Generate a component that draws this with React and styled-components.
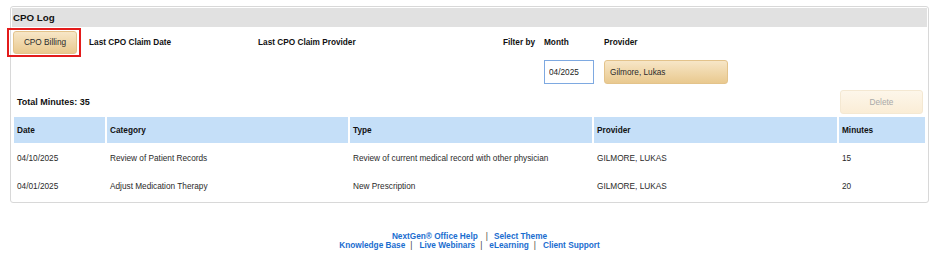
import React from "react";
import styled, { createGlobalStyle } from "styled-components";

const Global = createGlobalStyle`
  html, body { margin: 0; padding: 0; background: #fff; }
  body { font-family: "Liberation Sans", Arial, sans-serif; color: #222; }
`;

const Page = styled.div`
  padding: 6px 3px 0 10px;
`;

const Panel = styled.section`
  box-sizing: border-box;
  width: 919px;
  border: 1px solid #d8d8d8;
  border-radius: 3px;
  padding: 1px;
`;

const PanelHeader = styled.h2`
  margin: 0;
  height: 19px;
  line-height: 19px;
  padding-left: 1px;
  background: #e1e1e1;
  font-size: 9.75px;
  font-weight: bold;
  color: #111;
`;

const FilterGrid = styled.div`
  display: grid;
  grid-template-columns: 76px 169px 245px 41px 60px 1fr;
  grid-template-rows: 23px 24px;
  row-gap: 6px;
  padding: 4px 0 0 1px;
  align-items: center;
`;

const Label = styled.span`
  font-size: 8.25px;
  font-weight: bold;
  color: #111;
  grid-column: ${(p) => p.$col};
  grid-row: ${(p) => p.$row || 1};
`;

const Highlight = styled.div`
  position: relative;
  width: 64px;
  height: 23px;
  grid-column: 1;
  grid-row: 1;
  &::after {
    content: "";
    position: absolute;
    left: -6px;
    top: -3px;
    right: -4px;
    bottom: -3px;
    border: 2px solid #e31b1b;
    pointer-events: none;
  }
`;

const TanButton = styled.button`
  box-sizing: border-box;
  width: ${(p) => p.$w}px;
  height: ${(p) => p.$h}px;
  padding: ${(p) => (p.$left ? "0 0 0 5px" : "0")};
  text-align: ${(p) => (p.$left ? "left" : "center")};
  font-family: "Liberation Sans", Arial, sans-serif;
  font-size: 8.25px;
  color: ${(p) => (p.disabled ? "#a9a9a9" : "#2a2a2a")};
  border: 1px solid ${(p) => (p.disabled ? "#f4e8d2" : "#e3c38b")};
  border-radius: 3px;
  background: ${(p) =>
    p.disabled
      ? "linear-gradient(#fdf6ea, #faedd6)"
      : "linear-gradient(#f7e6c7, #e9c98f)"};
  cursor: ${(p) => (p.disabled ? "default" : "pointer")};
`;

const MonthInput = styled.input`
  box-sizing: border-box;
  width: 50px;
  height: 24px;
  padding: 0 0 0 4px;
  grid-column: 5;
  grid-row: 2;
  border: 1px solid #7ea9e1;
  font-family: "Liberation Sans", Arial, sans-serif;
  font-size: 8.25px;
  color: #222;
  outline: none;
`;

const ProviderCell = styled.div`
  grid-column: 6;
  grid-row: 2;
`;

const SummaryRow = styled.div`
  display: flex;
  justify-content: space-between;
  align-items: center;
  height: 24px;
  margin-top: 6px;
  padding: 0 4px 0 5px;
`;

const Total = styled.span`
  font-size: 9px;
  font-weight: bold;
  color: #111;
`;

const Table = styled.table`
  width: 100%;
  margin-top: 1px;
  border-collapse: separate;
  border-spacing: 2px;
  table-layout: fixed;
  font-size: 8.25px;
`;

const Th = styled.th`
  height: 26px;
  padding: 0 0 0 3px;
  background: #c5dff8;
  text-align: left;
  font-weight: bold;
  color: #111;
  box-sizing: border-box;
`;

const Td = styled.td`
  height: 26px;
  padding: 0 0 0 3px;
  color: #2a2a2a;
  box-sizing: border-box;
  white-space: nowrap;
`;

const Footer = styled.footer`
  width: 919px;
  margin-top: 29px;
  text-align: center;
  font-size: 8.25px;
  line-height: 9px;
  font-weight: bold;
`;

const FooterLine = styled.div``;

const Link = styled.a`
  color: #1a6dcf;
  text-decoration: none;
`;

const Sep = styled.span`
  display: inline-block;
  font-weight: normal;
  color: #444;
  margin: ${(p) => (p.$wide ? "0 6px 0 8px" : "0 7px 0 5px")};
`;

const rows = [
  {
    date: "04/10/2025",
    category: "Review of Patient Records",
    type: "Review of current medical record with other physician",
    provider: "GILMORE, LUKAS",
    minutes: 15,
  },
  {
    date: "04/01/2025",
    category: "Adjust Medication Therapy",
    type: "New Prescription",
    provider: "GILMORE, LUKAS",
    minutes: 20,
  },
];

export default function App() {
  const total = rows.reduce((s, r) => s + r.minutes, 0);
  return (
    <Page>
      <Global />
      <Panel>
        <PanelHeader>CPO Log</PanelHeader>
        <FilterGrid>
          <Highlight>
            <TanButton $w={64} $h={23}>CPO Billing</TanButton>
          </Highlight>
          <Label $col={2}>Last CPO Claim Date</Label>
          <Label $col={3}>Last CPO Claim Provider</Label>
          <Label $col={4}>Filter by</Label>
          <Label $col={5}>Month</Label>
          <Label $col={6}>Provider</Label>
          <MonthInput defaultValue="04/2025" />
          <ProviderCell>
            <TanButton $w={124} $h={24} $left>Gilmore, Lukas</TanButton>
          </ProviderCell>
        </FilterGrid>
        <SummaryRow>
          <Total>Total Minutes: {total}</Total>
          <TanButton $w={83} $h={24} disabled>Delete</TanButton>
        </SummaryRow>
        <Table>
          <colgroup>
            <col style={{ width: 91 }} />
            <col style={{ width: 241 }} />
            <col style={{ width: 242 }} />
            <col style={{ width: 243 }} />
            <col />
          </colgroup>
          <thead>
            <tr>
              <Th>Date</Th>
              <Th>Category</Th>
              <Th>Type</Th>
              <Th>Provider</Th>
              <Th>Minutes</Th>
            </tr>
          </thead>
          <tbody>
            {rows.map((r) => (
              <tr key={r.date}>
                <Td>{r.date}</Td>
                <Td>{r.category}</Td>
                <Td>{r.type}</Td>
                <Td>{r.provider}</Td>
                <Td>{r.minutes}</Td>
              </tr>
            ))}
          </tbody>
        </Table>
      </Panel>
      <Footer>
        <FooterLine>
          <Link href="#">NextGen® Office Help</Link>
          <Sep $wide>|</Sep>
          <Link href="#">Select Theme</Link>
        </FooterLine>
        <FooterLine>
          <Link href="#">Knowledge Base</Link>
          <Sep>|</Sep>
          <Link href="#">Live Webinars</Link>
          <Sep>|</Sep>
          <Link href="#">eLearning</Link>
          <Sep>|</Sep>
          <Link href="#">Client Support</Link>
        </FooterLine>
      </Footer>
    </Page>
  );
}
